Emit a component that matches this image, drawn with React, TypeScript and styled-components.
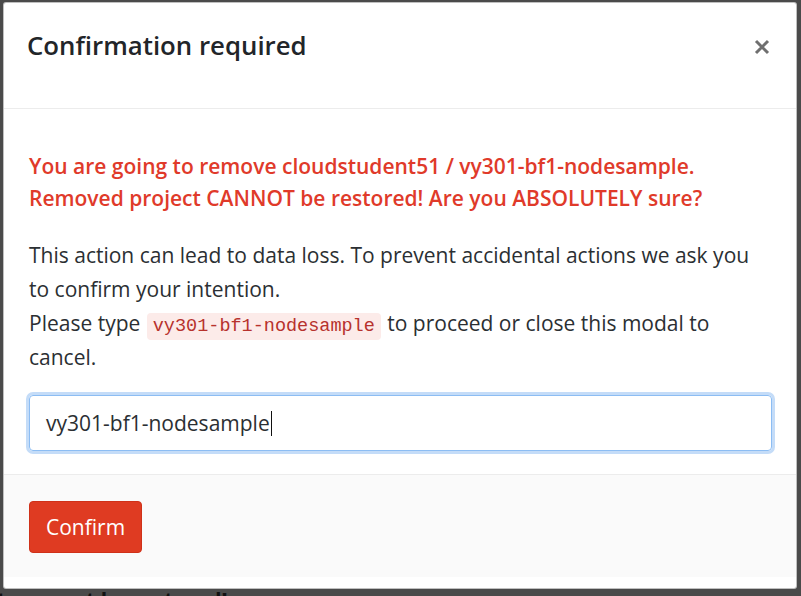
import React from 'react';
import styled, { createGlobalStyle } from 'styled-components';

const GlobalStyle = createGlobalStyle`
  html, body {
    margin: 0;
    padding: 0;
    height: 596px;
    overflow: hidden;
    background: #4a4a4a;
  }
  body {
    font-family: 'Open Sans', 'Noto Sans', sans-serif;
  }
`;

const Backdrop = styled.div`
  display: flex;
  flex-direction: column;
  padding: 2px 4px 0 3px;
  height: 596px;
  box-sizing: border-box;
`;

const Modal = styled.div`
  display: flex;
  flex-direction: column;
  background: #ffffff;
  border: 1px solid rgba(0, 0, 0, 0.25);
  border-radius: 3px;
  padding-bottom: 11px;
`;

const Header = styled.div`
  display: flex;
  align-items: flex-start;
  justify-content: space-between;
  height: 106px;
  padding: 25px 24px 0 23px;
  box-sizing: border-box;
  border-bottom: 1px solid #ececec;
`;

const Title = styled.h4`
  margin: 0;
  font-size: 25.8px;
  line-height: 34px;
  font-weight: 600;
  color: #222529;
`;

const Close = styled.button`
  border: 0;
  background: transparent;
  padding: 0;
  margin-top: 9px;
  width: 20px;
  height: 20px;
  display: flex;
  align-items: center;
  justify-content: center;
  cursor: pointer;
`;

const Body = styled.div`
  display: flex;
  flex-direction: column;
  padding: 41px 24px 23px 25px;
  border-bottom: 1px solid #ececec;
`;

const Warning = styled.p`
  margin: 0 0 24px;
  font-size: 21px;
  font-weight: 600;
  line-height: 32px;
  color: #e03a2a;
`;

const Text = styled.p`
  margin: 0 0 21px;
  font-size: 21px;
  line-height: 34px;
  color: #2b2f33;
`;

const Code = styled.code`
  display: inline-block;
  font-family: 'Liberation Mono', 'DejaVu Sans Mono', monospace;
  font-size: 18.5px;
  line-height: 27px;
  color: #b7322d;
  background: #fcebe9;
  border-radius: 4px;
  padding: 0 6px;
  margin: 0 1px;
`;

const Field = styled.div`
  display: flex;
  align-items: center;
  height: 54px;
  padding: 0 16px;
  border: 1px solid #8cbdf3;
  border-radius: 4px;
  box-shadow: 0 0 0 3px #c4dcf8;
  font-size: 21px;
  color: #2b2f33;
`;

const Caret = styled.span`
  display: inline-block;
  width: 1px;
  height: 25px;
  background: #111;
  margin-left: 1px;
`;

const Footer = styled.div`
  display: flex;
  background: #fafafa;
  padding: 26px 25px 24px;
`;

const ConfirmButton = styled.button`
  font-family: 'Open Sans', 'Noto Sans', sans-serif;
  font-size: 21px;
  color: #ffffff;
  background: #df3b22;
  border: 1px solid #cf3119;
  border-radius: 4px;
  height: 52px;
  padding: 0 16px;
  cursor: pointer;
`;

const Behind = styled.div`
  margin-left: -6px;
  font-size: 21px;
  font-weight: 700;
  color: #111;
  line-height: 22px;
  white-space: nowrap;
`;

export default function App() {
  return (
    <>
      <GlobalStyle />
      <Backdrop>
        <Modal>
          <Header>
            <Title>Confirmation required</Title>
            <Close aria-label="Close">
              <svg width="16" height="16" viewBox="0 0 16 16">
                <path d="M2 2L14 14M14 2L2 14" stroke="#6f6f6f" strokeWidth="3" />
              </svg>
            </Close>
          </Header>
          <Body>
            <Warning>
              You are going to remove cloudstudent51 / vy301-bf1-nodesample.
              <br />
              Removed project CANNOT be restored! Are you ABSOLUTELY sure?
            </Warning>
            <Text>
              This action can lead to data loss. To prevent accidental actions we ask you to confirm
              your intention.
              <br />
              Please type <Code>vy301-bf1-nodesample</Code> to proceed or close this modal to
              cancel.
            </Text>
            <Field role="textbox">
              vy301-bf1-nodesample
              <Caret />
            </Field>
          </Body>
          <Footer>
            <ConfirmButton>Confirm</ConfirmButton>
          </Footer>
        </Modal>
        <Behind>ts cannot be restored!</Behind>
      </Backdrop>
    </>
  );
}
